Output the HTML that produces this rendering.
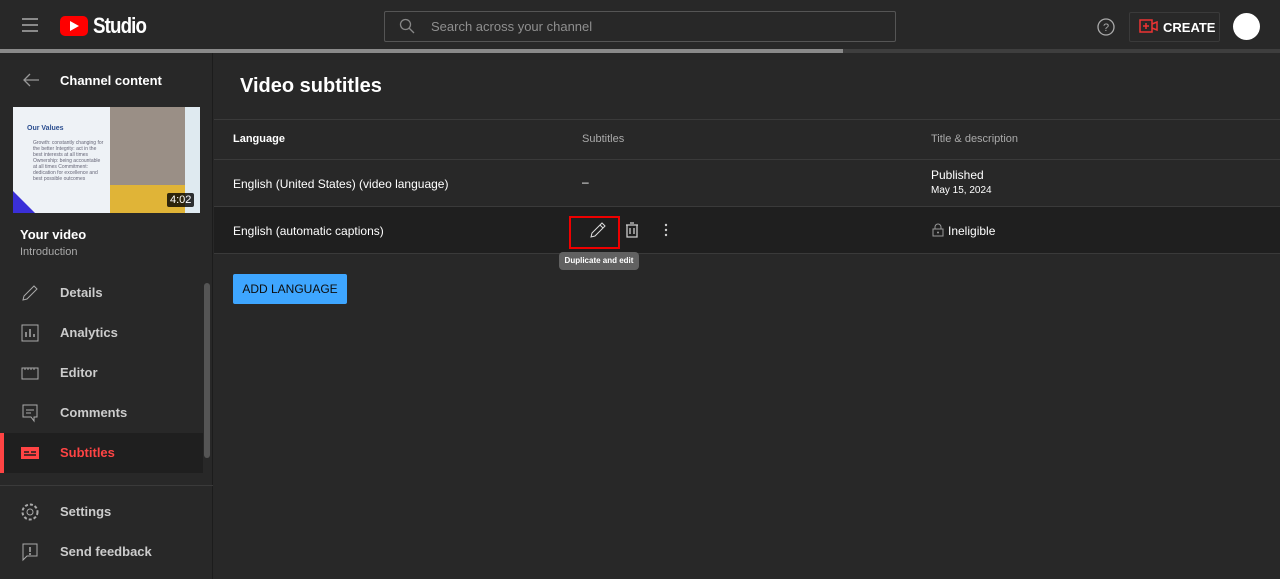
<!DOCTYPE html>
<html><head><meta charset="utf-8"><style>
*{box-sizing:border-box;margin:0;padding:0}
body{width:1280px;height:579px;overflow:hidden;background:#282828;font-family:"Liberation Sans",sans-serif;color:#fff;position:relative}
.abs{position:absolute}
.hdr{left:0;top:0;width:1280px;height:50px;background:#282828}
.bar{top:49px;height:4px;left:0;width:1280px;background:#3e3e3e}
.bar2{top:49px;height:4px;left:0;width:843px;background:#8a8a8a}
.side{left:0;top:53px;width:213px;height:526px;background:#282828;border-right:1px solid #1c1c1c}
.nav{left:0;width:203px;height:40px;font-size:13px;color:#ccc;font-weight:bold}
.nav span{position:absolute;left:60px;top:12px}
.nav svg{position:absolute;left:20px;top:10px}
.line{height:1px;background:#3a3a3a;left:214px;width:1066px}
.t{font-size:12px}
</style></head><body>
<div class="abs hdr"></div>
<svg class="abs" style="left:22px;top:18px" width="16" height="14"><path d="M0 1h16M0 7h16M0 13h16" stroke="#aaa" stroke-width="1.5"/></svg>
<div class="abs" style="left:60px;top:16px;width:28px;height:20px;background:#f00;border-radius:5px"></div>
<svg class="abs" style="left:70px;top:21px" width="10" height="10"><path d="M0 0L9 5L0 10Z" fill="#fff"/></svg>
<div class="abs" style="left:93px;top:13px;font-size:22px;font-weight:bold;letter-spacing:-1px;transform:scaleX(.85);transform-origin:left">Studio</div>
<div class="abs" style="left:384px;top:11px;width:512px;height:31px;border:1px solid #555;border-radius:2px;background:#282828"></div>
<svg class="abs" style="left:399px;top:18px" width="16" height="16"><circle cx="6.5" cy="6.5" r="5" stroke="#888" stroke-width="1.3" fill="none"/><path d="M10 10l5 5" stroke="#888" stroke-width="1.3"/></svg>
<div class="abs" style="left:431px;top:19px;font-size:13px;color:#8f8f8f">Search across your channel</div>
<svg class="abs" style="left:1097px;top:18px" width="18" height="18"><circle cx="9" cy="9" r="8" stroke="#aaa" stroke-width="1.3" fill="none"/><text x="9" y="13" font-size="11" fill="#aaa" text-anchor="middle" font-family="Liberation Sans">?</text></svg>
<div class="abs" style="left:1129px;top:12px;width:91px;height:30px;border:1px solid #3a3a3a;border-radius:2px"></div>
<svg class="abs" style="left:1139px;top:19px" width="19" height="14"><rect x="1" y="1" width="12" height="12" stroke="#e33" stroke-width="1.5" fill="none"/><path d="M13 5l5-2v8l-5-2" stroke="#e33" stroke-width="1.5" fill="none"/><path d="M7 4v6M4 7h6" stroke="#e33" stroke-width="1.5"/></svg>
<div class="abs" style="left:1163px;top:20px;font-size:13px;font-weight:bold">CREATE</div>
<div class="abs" style="left:1233px;top:13px;width:27px;height:27px;border-radius:50%;background:#fff"></div>
<div class="abs bar"></div><div class="abs bar2"></div>
<div class="abs side"></div>
<svg class="abs" style="left:22px;top:72px" width="18" height="16"><path d="M17 8H2M8 2L2 8l6 6" stroke="#999" stroke-width="1.3" fill="none"/></svg>
<div class="abs" style="left:60px;top:73px;font-size:13px;font-weight:bold">Channel content</div>
<div class="abs" style="left:13px;top:107px;width:187px;height:106px;background:#eef2f6;overflow:hidden">
 <div class="abs" style="left:97px;top:0;width:90px;height:106px;background:#9a8f86"></div>
 <div class="abs" style="left:97px;top:78px;width:75px;height:28px;background:#e0b437"></div>
 <div class="abs" style="left:172px;top:0;width:15px;height:106px;background:#dfeaf0"></div>
 <div class="abs" style="left:14px;top:18px;font-size:7px;font-weight:bold;color:#2a4d8f">Our Values</div>
 <div class="abs" style="left:20px;top:33px;font-size:5px;line-height:6px;color:#667;width:72px">Growth: constantly changing for the better Integrity: act in the best interests at all times Ownership: being accountable at all times Commitment: dedication for excellence and best possible outcomes</div>
 <svg class="abs" style="left:0;top:84px" width="24" height="22"><path d="M0 0L22 22H0Z" fill="#3a2fd8"/></svg>
 <div class="abs" style="left:154px;top:86px;background:rgba(0,0,0,.8);font-size:11px;padding:1px 3px;border-radius:2px">4:02</div>
</div>
<div class="abs" style="left:20px;top:227px;font-size:13px;font-weight:bold">Your video</div>
<div class="abs" style="left:20px;top:246px;font-size:11px;color:#aaa">Introduction</div>
<div class="abs" style="left:204px;top:283px;width:6px;height:175px;background:#555;border-radius:3px"></div>
<div class="abs nav" style="top:273px"><svg width="20" height="20"><path d="M3 17l1-4L14 3l3 3L7 16z" stroke="#aaa" fill="none"/></svg><span>Details</span></div>
<div class="abs nav" style="top:313px"><svg width="20" height="20"><rect x="2" y="2" width="16" height="16" stroke="#aaa" fill="none"/><path d="M6 14V9M10 14V6M14 14v-3" stroke="#aaa" stroke-width="1.5"/></svg><span>Analytics</span></div>
<div class="abs nav" style="top:353px"><svg width="20" height="20"><rect x="2" y="5" width="16" height="11" stroke="#aaa" fill="none"/><path d="M5 5v2M8 5v2M11 5v2M14 5v2" stroke="#aaa"/></svg><span>Editor</span></div>
<div class="abs nav" style="top:393px"><svg width="20" height="20"><path d="M3 2h14v12h-3v4l-3-4H3z" stroke="#aaa" fill="none"/><path d="M6 7h8M6 10h5" stroke="#aaa"/></svg><span>Comments</span></div>
<div class="abs" style="left:0;top:433px;width:203px;height:40px;background:#1f1f1f"></div>
<div class="abs" style="left:0;top:433px;width:4px;height:40px;background:#f44"></div>
<div class="abs nav" style="top:433px;color:#f44"><svg width="20" height="20"><rect x="1" y="4" width="18" height="12" fill="#f44"/><path d="M4 9h5M11 9h5M4 12h12" stroke="#1f1f1f" stroke-width="1.5"/></svg><span>Subtitles</span></div>
<div class="abs" style="left:0;top:485px;width:213px;height:1px;background:#3a3a3a"></div>
<div class="abs nav" style="top:492px"><svg width="20" height="20"><circle cx="10" cy="10" r="3" stroke="#aaa" fill="none"/><circle cx="10" cy="10" r="7.5" stroke="#aaa" stroke-dasharray="3 2" stroke-width="2" fill="none"/></svg><span>Settings</span></div>
<div class="abs nav" style="top:532px"><svg width="20" height="20"><path d="M3 2h14v12H7l-4 4z" stroke="#aaa" fill="none"/><path d="M10 5v5M10 11v2" stroke="#aaa" stroke-width="1.5"/></svg><span>Send feedback</span></div>

<div class="abs" style="left:240px;top:75px;font-size:20px;font-weight:bold">Video subtitles</div>
<div class="abs line" style="top:119px"></div>
<div class="abs t" style="left:233px;top:133px;font-weight:bold;font-size:11px">Language</div>
<div class="abs t" style="left:582px;top:133px;color:#aaa;font-size:11px">Subtitles</div>
<div class="abs t" style="left:931px;top:133px;color:#aaa;font-size:11px">Title &amp; description</div>
<div class="abs line" style="top:159px"></div>
<div class="abs t" style="left:233px;top:177px">English (United States) (video language)</div>
<div class="abs t" style="left:582px;top:175px">–</div>
<div class="abs t" style="left:931px;top:168px">Published</div>
<div class="abs" style="left:931px;top:185px;font-size:10px">May 15, 2024</div>
<div class="abs line" style="top:206px"></div>
<div class="abs" style="left:214px;top:207px;width:1066px;height:46px;background:#1f1f1f"></div>
<div class="abs t" style="left:233px;top:224px">English (automatic captions)</div>
<div class="abs" style="left:569px;top:216px;width:51px;height:33px;border:2px solid #e00"></div>
<svg class="abs" style="left:589px;top:221px" width="18" height="18"><path d="M2 16l1-4L13 2l3 3L6 15z M11 4l3 3" stroke="#ddd" fill="none"/></svg>
<svg class="abs" style="left:625px;top:222px" width="14" height="16"><path d="M1 3h12M5 1h4M2 3h10v12H2z M5 6v6M9 6v6" stroke="#ccc" stroke-width="1.3" fill="none"/></svg>
<svg class="abs" style="left:663px;top:223px" width="6" height="14"><circle cx="3" cy="2" r="1.2" fill="#ccc"/><circle cx="3" cy="7" r="1.2" fill="#ccc"/><circle cx="3" cy="12" r="1.2" fill="#ccc"/></svg>
<svg class="abs" style="left:932px;top:223px" width="12" height="14"><rect x="1" y="6" width="10" height="7" stroke="#999" fill="none"/><path d="M3 6V4a3 3 0 016 0v2" stroke="#999" fill="none"/><circle cx="6" cy="9.5" r="1" fill="#999"/></svg>
<div class="abs t" style="left:948px;top:224px">Ineligible</div>
<div class="abs line" style="top:253px"></div>
<div class="abs" style="left:559px;top:252px;width:80px;height:18px;background:#616161;border-radius:4px;font-size:8px;font-weight:bold;text-align:center;line-height:18px">Duplicate and edit</div>
<div class="abs" style="left:233px;top:274px;width:114px;height:30px;background:#3ea6ff;border-radius:2px;color:#0d0d0d;font-size:12px;text-align:center;line-height:30px">ADD LANGUAGE</div>
</body></html>
